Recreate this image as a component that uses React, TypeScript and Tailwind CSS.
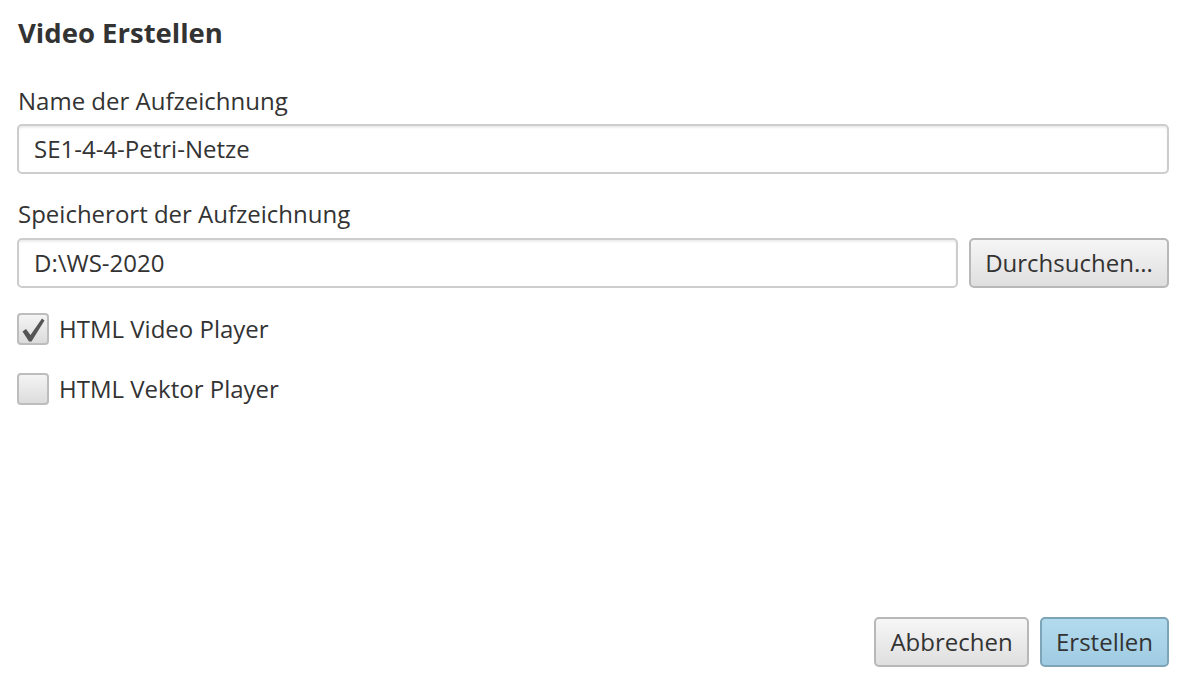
import React from "react";

const font = { fontFamily: '"Open Sans", "Noto Sans", sans-serif' };

function Checkbox({ checked }: { checked: boolean }) {
  return (
    <div className="w-[32px] h-[32px] rounded-[4px] border-2 border-[#bdbdbd] bg-gradient-to-b from-[#f4f4f4] to-[#dcdcdc] flex items-center justify-center shrink-0 relative">
      {checked && (
        <svg width="32" height="32" viewBox="0 0 32 32" className="absolute left-[-2px] top-[-2px]">
          <polygon points="5.5,18.5 9,16 13.5,22 25,5.5 27.5,7.5 14.5,28.5 12,28.5" fill="#555" />
        </svg>
      )}
    </div>
  );
}

export default function App() {
  return (
    <div className="w-[1186px] h-[682px] bg-white text-[#333] flex flex-col px-[17px] pt-[15px] pb-[15px]" style={font}>
      <h1 className="text-[27.5px] font-bold leading-[36px] pl-[1px]">Video Erstellen</h1>
      <label className="text-[24px] leading-[32px] mt-[34px] pl-[1px]">Name der Aufzeichnung</label>
      <div className="mt-[7px] h-[50px] rounded-[5px] border-2 border-[#cdcdcd] shadow-[inset_0_2px_2px_rgba(0,0,0,0.07)] flex items-center pl-[15px] text-[24px]">
        SE1-4-4-Petri-Netze
      </div>
      <label className="text-[24px] leading-[32px] mt-[24px] pl-[1px]">Speicherort der Aufzeichnung</label>
      <div className="mt-[8px] flex gap-[11px]">
        <div className="flex-1 h-[50px] rounded-[5px] border-2 border-[#cdcdcd] shadow-[inset_0_2px_2px_rgba(0,0,0,0.07)] flex items-center pl-[15px] text-[24px]">
          D:\WS-2020
        </div>
        <button className="w-[200px] h-[50px] rounded-[5px] border-2 border-[#b8b8b8] bg-gradient-to-b from-[#f6f6f6] to-[#dfdfdf] text-[24px]">
          Durchsuchen...
        </button>
      </div>
      <div className="mt-[23px] flex items-center gap-[10px] h-[36px]">
        <Checkbox checked />
        <span className="text-[24px] leading-[36px]">HTML Video Player</span>
      </div>
      <div className="mt-[24px] flex items-center gap-[10px] h-[36px]">
        <Checkbox checked={false} />
        <span className="text-[24px] leading-[36px]">HTML Vektor Player</span>
      </div>
      <div className="mt-auto flex justify-end gap-[11px]">
        <button className="w-[155px] h-[50px] rounded-[5px] border-2 border-[#b8b8b8] bg-gradient-to-b from-[#f6f6f6] to-[#dfdfdf] text-[24px]">
          Abbrechen
        </button>
        <button className="w-[129px] h-[50px] rounded-[5px] border-2 border-[#7ea4b8] bg-gradient-to-b from-[#b3dbee] to-[#9fcbe2] text-[24px]">
          Erstellen
        </button>
      </div>
    </div>
  );
}
